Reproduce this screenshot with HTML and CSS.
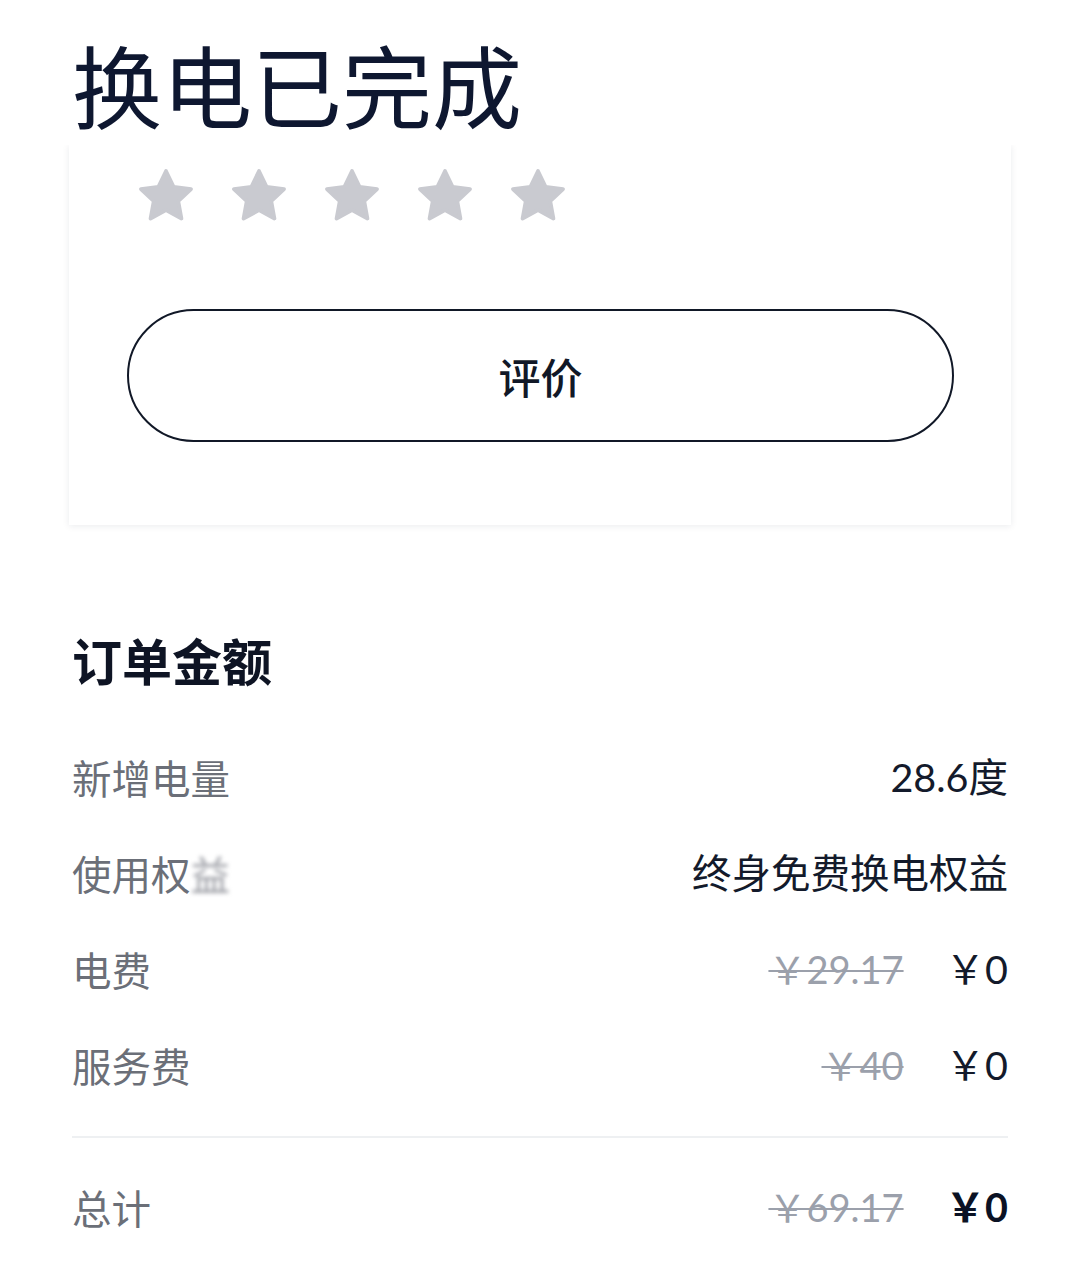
FILE: index.html
```html
<!DOCTYPE html>
<html lang="zh-CN">
<head>
<meta charset="utf-8">
<title>换电已完成</title>
<link rel="stylesheet" href="styles.css">
</head>
<body>
<header class="header">
  <h1 class="title">换电已完成</h1>
</header>
<div class="card-clip">
  <div class="card">
    <div class="stars">
      <svg class="star" viewBox="0 0 24 24"><path d="M12 2.6l2.85 5.95 6.55.85-4.8 4.55 1.2 6.5L12 17.3l-5.8 3.15 1.2-6.5-4.8-4.55 6.55-.85z"/></svg>
      <svg class="star" viewBox="0 0 24 24"><path d="M12 2.6l2.85 5.95 6.55.85-4.8 4.55 1.2 6.5L12 17.3l-5.8 3.15 1.2-6.5-4.8-4.55 6.55-.85z"/></svg>
      <svg class="star" viewBox="0 0 24 24"><path d="M12 2.6l2.85 5.95 6.55.85-4.8 4.55 1.2 6.5L12 17.3l-5.8 3.15 1.2-6.5-4.8-4.55 6.55-.85z"/></svg>
      <svg class="star" viewBox="0 0 24 24"><path d="M12 2.6l2.85 5.95 6.55.85-4.8 4.55 1.2 6.5L12 17.3l-5.8 3.15 1.2-6.5-4.8-4.55 6.55-.85z"/></svg>
      <svg class="star" viewBox="0 0 24 24"><path d="M12 2.6l2.85 5.95 6.55.85-4.8 4.55 1.2 6.5L12 17.3l-5.8 3.15 1.2-6.5-4.8-4.55 6.55-.85z"/></svg>
    </div>
    <button class="rate-btn" type="button">评价</button>
  </div>
</div>
<section class="order">
  <h2 class="order-title">订单金额</h2>
  <div class="row">
    <span class="label">新增电量</span>
    <span class="value">28.6度</span>
  </div>
  <div class="row">
    <span class="label">使用权<span class="blur">益</span></span>
    <span class="value">终身免费换电权益</span>
  </div>
  <div class="row">
    <span class="label">电费</span>
    <span class="value"><s class="old">￥29.17</s><span class="now">￥0</span></span>
  </div>
  <div class="row">
    <span class="label">服务费</span>
    <span class="value"><s class="old">￥40</s><span class="now">￥0</span></span>
  </div>
  <div class="divider"></div>
  <div class="row">
    <span class="label">总计</span>
    <span class="value"><s class="old">￥69.17</s><span class="now total">￥0</span></span>
  </div>
</section>
</body>
</html>
```
FILE: styles.css
```css
html, body {
  margin: 0;
  padding: 0;
  background: #ffffff;
}
body {
  font-family: Lato, "Noto Sans CJK SC", sans-serif;
  color: #111a2c;
  width: 1080px;
}
.header {
  height: 145px;
  box-sizing: border-box;
  padding: 38px 0 0 72px;
  background: #ffffff;
}
.title {
  margin: 0;
  font-family: "Noto Sans CJK SC", sans-serif;
  font-size: 90px;
  font-weight: 400;
  line-height: 90px;
  color: #0e1730;
}
.card-clip {
  margin: 0 59px;
  padding: 0 10px 14px;
  overflow: hidden;
}
.card {
  background: #ffffff;
  box-shadow: 0 1px 7px rgba(20, 30, 60, 0.09);
  padding: 19px 57px 83px 58px;
}
.stars {
  display: flex;
  gap: 29px;
  margin-left: 7px;
  height: 64px;
}
.star {
  width: 64px;
  height: 64px;
  display: block;
}
.star path {
  fill: #c9cad0;
  stroke: #c9cad0;
  stroke-width: 1.4;
  stroke-linejoin: round;
}
.rate-btn {
  display: block;
  width: 100%;
  height: 133px;
  margin-top: 81px;
  border: 2.5px solid #111827;
  border-radius: 67px;
  background: #ffffff;
  font-family: "Noto Sans CJK SC", sans-serif;
  font-size: 42px;
  font-weight: 500;
  color: #111827;
  padding: 0;
}
.order {
  padding: 90px 72px 0 72px;
}
.order-title {
  margin: 0 0 40px;
  font-family: "Noto Sans CJK SC", sans-serif;
  font-size: 50px;
  font-weight: 700;
  line-height: 60px;
  color: #0e1424;
}
.row {
  display: flex;
  justify-content: space-between;
  align-items: center;
  height: 96px;
  font-size: 39.5px;
  line-height: 96px;
}
.label {
  font-family: "Noto Sans CJK SC", sans-serif;
  color: #6b6f78;
}
.blur {
  color: #9a9ca3;
  filter: blur(2px);
}
.value {
  display: flex;
  align-items: center;
  color: #131a2b;
  font-family: Lato, "Noto Sans CJK SC", sans-serif;
}
.old {
  color: #9ba0ab;
  margin-right: 42px;
  font-size: 38px;
  font-family: Lato, "Noto Sans CJK SC", sans-serif;
  text-decoration-thickness: 2px;
  text-decoration-color: #9ba0ab;
}
.now {
  color: #131a2b;
  font-family: Lato, "Noto Sans CJK SC", sans-serif;
}
.total {
  font-weight: 700;
  color: #0b1224;
}
.divider {
  height: 2px;
  background: #eef0f2;
  margin: 23px 0 21px;
}
```
